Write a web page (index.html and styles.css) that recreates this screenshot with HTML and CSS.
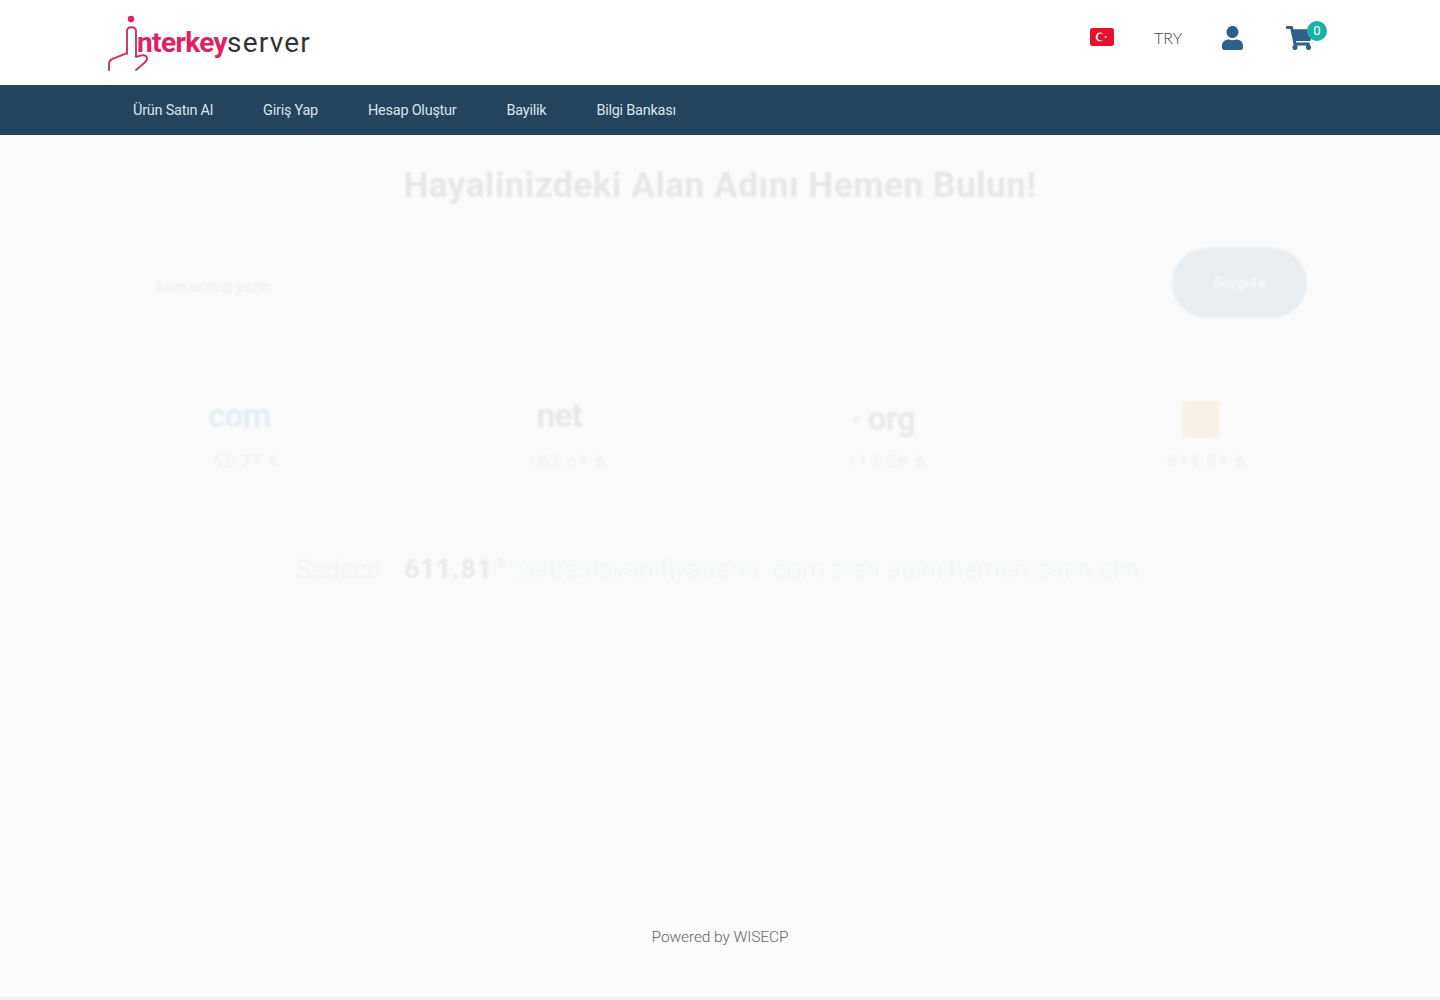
FILE: index.html
```html
<!DOCTYPE html>
<html lang="tr">
<head>
<meta charset="utf-8">
<title>Interkey Server</title>
<link rel="stylesheet" href="styles.css">
</head>
<body>
<header class="top">
  <a class="logo" href="#">
    <svg class="logo-hand" viewBox="0 0 44 60" width="44" height="60" aria-hidden="true">
      <circle cx="24" cy="5" r="3.2" fill="#e0215f"/>
      <path d="M20 40V17c0-5 9-5 9 0v26c5-2 10-3 11 1 1 3-4 6-11 12M20 39c-4 2-8 3-12 5-4 1-6 3-6 6v6" fill="none" stroke="#c9375f" stroke-width="1.9" stroke-linecap="round" stroke-linejoin="round"/>
    </svg>
    <span class="logo-text"><span class="logo-pink">nterkey</span><span class="logo-dark">server</span></span>
  </a>
  <div class="tools">
    <svg class="flag" viewBox="0 0 24 18" width="24" height="18" aria-hidden="true">
      <rect width="24" height="18" rx="2.5" fill="#e8112d"/>
      <circle cx="10" cy="9" r="4.4" fill="#fff"/>
      <circle cx="11.1" cy="9" r="3.5" fill="#e8112d"/>
      <path d="M14.2 9l2.7-.9-1.7 2.3V7.6l1.7 2.3z" fill="#fff"/>
    </svg>
    <span class="currency">TRY</span>
    <svg class="user" viewBox="0 0 448 512" width="21" height="24" aria-hidden="true"><path d="M224 256c70.7 0 128-57.3 128-128S294.7 0 224 0 96 57.3 96 128s57.3 128 128 128zm89.6 32h-16.7c-22.2 10.2-46.9 16-72.9 16s-50.6-5.8-72.9-16h-16.7C60.2 288 0 348.2 0 422.4V464c0 26.5 21.5 48 48 48h352c26.5 0 48-21.5 48-48v-41.6c0-74.2-60.2-134.4-134.4-134.4z"/></svg>
    <span class="cart">
      <svg viewBox="0 0 576 512" width="27" height="24" aria-hidden="true"><path d="M528.12 301.319l47.273-208C578.806 78.301 567.391 67 552 67H159.208l-9.166-44.81C147.758 10.021 137.93 0 124 0H24C10.745 0 0 10.745 0 24v16c0 13.255 10.745 24 24 24h69.883l70.248 343.435C147.325 417.1 136 435.222 136 456c0 30.928 25.072 56 56 56s56-25.072 56-56c0-15.674-6.447-29.835-16.824-40h209.647C430.447 426.165 424 440.326 424 456c0 30.928 25.072 56 56 56s56-25.072 56-56c0-22.172-12.888-41.332-31.579-50.405l5.517-24.276c3.413-15.018-8.002-29.319-23.403-29.319H218.117l-6.545-32h293.145c11.206 0 20.92-7.754 23.403-18.681z"/></svg>
      <span class="badge">0</span>
    </span>
  </div>
</header>
<nav class="nav">
  <a href="#">Ürün Satın Al</a>
  <a href="#">Giriş Yap</a>
  <a href="#">Hesap Oluştur</a>
  <a href="#">Bayilik</a>
  <a href="#">Bilgi Bankası</a>
</nav>
<main class="main">
  <h1 class="title">Hayalinizdeki Alan Adını Hemen Bulun!</h1>
  <div class="search">
    <span class="placeholder">Alan adınızı yazın</span>
    <span class="btn">Sorgula</span>
  </div>
  <div class="tlds">
    <div class="tld"><span class="tld-logo com">com</span><span class="price">55,77 ₺</span></div>
    <div class="tld"><span class="tld-logo net">net</span><span class="price">103,61 ₺</span></div>
    <div class="tld"><span class="tld-logo org"><i class="dot"></i>org</span><span class="price">119,36 ₺</span></div>
    <div class="tld"><span class="tld-logo square"></span><span class="price">611,81 ₺</span></div>
  </div>
  <p class="promo"><span class="promo-a">Sadece</span> <b class="promo-b">611.81</b><sup class="promo-s">₺</sup> <span class="promo-c">'ye başlayan fiyatlarla .com alan adını hemen satın alın</span></p>
</main>
<footer class="foot">Powered by WISECP</footer>
</body>
</html>
```
FILE: styles.css
```css
* { box-sizing: border-box; }
html, body { margin: 0; height: 100%; }
body {
  min-height: 1000px;
  display: flex;
  flex-direction: column;
  background: #fafafa;
  font-family: "Roboto", "Liberation Sans", sans-serif;
  border-bottom: 3px solid #eef0f1;
}
a { text-decoration: none; color: inherit; }

.top {
  height: 85px;
  flex: none;
  background: #fff;
  display: flex;
  align-items: flex-start;
  padding: 0 127px 0 107px;
}
.logo { display: flex; align-items: flex-start; padding-top: 14px; }
.logo-hand { margin-right: -14px; }
.logo-text { font-size: 28px; line-height: 30px; margin-top: 14px; }
.logo-pink { color: #e0215f; font-weight: 700; letter-spacing: -.6px; }
.logo-dark { color: #333; font-weight: 400; letter-spacing: 1.2px; }

.tools { margin-left: auto; display: flex; align-items: flex-start; padding-top: 26px; }
.flag { margin-top: 2px; }
.currency { margin-left: 40px; margin-top: 2px; width: 27px; font-family: "Lato", sans-serif; font-weight: 300; font-size: 16px; line-height: 19px; color: #444; }
.user { margin-left: 41px; fill: #2f6089; }
.cart { position: relative; margin-left: 43px; display: block; width: 27px; height: 24px; fill: #2f6089; }
.cart svg { display: block; }
.badge {
  position: absolute; left: 21px; top: -5px;
  width: 20px; height: 20px; border-radius: 50%;
  background: #17b1a8; color: #fff;
  font-size: 13px; line-height: 20px; text-align: center;
}

.nav {
  height: 50px;
  flex: none;
  background: #24435c;
  display: flex;
  align-items: center;
  gap: 50px;
  padding: 1px 0 0 133px;
  font-size: 14.5px;
  letter-spacing: -0.25px;
  color: #d9e5ee;
}

.main {
  flex: 1;
  padding: 0 73px 0 87px;
  display: flex;
  flex-direction: column;
  filter: blur(1.2px);
}
.title {
  margin: 29px 0 0 -14px;
  text-align: center;
  font-size: 35px;
  line-height: 44px;
  font-weight: 700;
  letter-spacing: .6px;
  color: #e7e7e7;
}
.search {
  display: flex;
  align-items: center;
  justify-content: space-between;
  margin: 40px 60px 0 68px;
  height: 70px;
}
.placeholder { font-size: 15px; color: #ededed; padding-top: 8px; }
.btn {
  width: 135px; height: 70px;
  border-radius: 35px;
  background: #e9edf0;
  color: #fbfbfb;
  font-size: 15px; font-weight: 500;
  display: flex; align-items: center; justify-content: center;
}
.tlds {
  display: grid;
  grid-template-columns: repeat(4, 320px);
  margin-top: 80px;
}
.tld { display: flex; flex-direction: column; align-items: center; gap: 13px; }
.tld-logo { height: 40px; font-size: 33px; line-height: 36px; font-weight: 700; letter-spacing: -.6px; display: block; }
.com { color: #e4eef3; margin-left: -15px; }
.net { color: #e8e8e8; margin-left: -15px; }
.org { color: #e9e9e9; display: flex; align-items: center; gap: 8px; margin-left: -5px; padding-top: 1px; }
.dot { width: 6px; height: 6px; border-radius: 50%; background: #f9efe8; }
.square { width: 36px; height: 37px; background: #f8f2e6; border-radius: 2px; margin: 3px 0 0 -12px; }
.price { font-size: 17px; line-height: 20px; color: #efefef; letter-spacing: 1.8px; }
.promo {
  margin: 78px 0 0 209px;
  font-size: 26px;
  line-height: 40px;
  white-space: nowrap;
  font-weight: 300;
}
.promo-a { color: #efefef; margin-right: 18px; }
.promo-b { color: #e9e9e9; font-weight: 700; letter-spacing: 1px; }
.promo-s { font-size: 15px; color: #efefef; line-height: 0; margin: 0 0 0 6px; }
.promo-c { color: #eff6f5; letter-spacing: .25px; }

.foot {
  flex: none;
  height: 71px;
  text-align: center;
  font-size: 15.5px;
  line-height: 20px;
  letter-spacing: -0.1px;
  font-weight: 300;
  color: #666;
  padding-top: 1px;
}
```
